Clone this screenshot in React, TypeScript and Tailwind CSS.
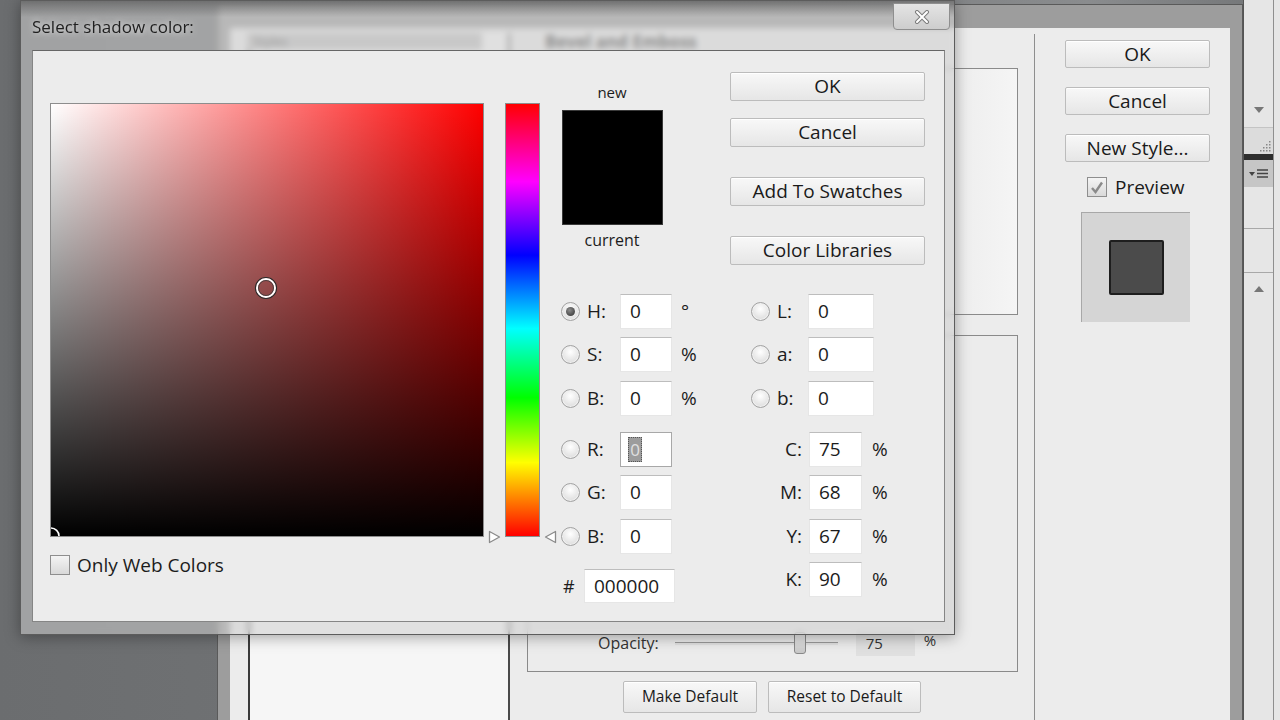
import React from "react";

const ui = "font-[family-name:'Open_Sans','Noto_Sans',sans-serif]";

function Btn({ children, className = "" }: { children: React.ReactNode; className?: string }) {
  return (
    <div
      className={`flex items-center justify-center rounded-[2px] border border-[#bcbcbc] bg-[linear-gradient(to_bottom,#f8f8f8,#e6e6e6)] text-[#1a1a1a] shadow-[inset_0_1px_0_#ffffff] ${className}`}
    >
      {children}
    </div>
  );
}

function Radio({ on = false }: { on?: boolean }) {
  return (
    <span className="flex h-[19px] w-[19px] shrink-0 items-center justify-center rounded-full border border-[#a2a2a2] bg-[radial-gradient(circle_at_50%_35%,#ffffff,#d4d4d4)] shadow-[inset_0_0_0_1px_#f0f0f0]">
      {on && <span className="h-[9px] w-[9px] rounded-full bg-[radial-gradient(circle_at_40%_35%,#8c8c8c,#2c2c2c)]" />}
    </span>
  );
}

function Check({ on = false }: { on?: boolean }) {
  return (
    <span className="flex h-[20px] w-[20px] shrink-0 items-center justify-center border border-[#8e8e8e] bg-[linear-gradient(to_bottom,#f4f4f4,#d9d9d9)]">
      {on && (
        <svg width="14" height="13" viewBox="0 0 14 13">
          <path d="M2 7 L5.5 11 L12 1.5" fill="none" stroke="#8a8a8a" strokeWidth="2.4" />
        </svg>
      )}
    </span>
  );
}

function Box({ w, children }: { w: string; children: React.ReactNode }) {
  return (
    <div className={`flex h-[35px] shrink-0 items-center border border-[#e6e6e6] border-t-[#bdbdbd] bg-white pl-[9px] text-[19px] text-[#1c1c1c] ${w}`}>
      {children}
    </div>
  );
}

type LeftRow = { label: string; v: string; unit?: string; on?: boolean; focus?: boolean };
type RightRow = { label: string; v: string; radio: boolean };

const leftRows: LeftRow[] = [
  { label: "H:", v: "0", unit: "°", on: true },
  { label: "S:", v: "0", unit: "%" },
  { label: "B:", v: "0", unit: "%" },
  { label: "R:", v: "0", focus: true },
  { label: "G:", v: "0" },
  { label: "B:", v: "0" },
];

const rightRows: RightRow[] = [
  { label: "L:", v: "0", radio: true },
  { label: "a:", v: "0", radio: true },
  { label: "b:", v: "0", radio: true },
  { label: "C:", v: "75", radio: false },
  { label: "M:", v: "68", radio: false },
  { label: "Y:", v: "67", radio: false },
];

const rowGaps = ["mt-0", "mt-[8px]", "mt-[9px]", "mt-[16px]", "mt-[8px]", "mt-[9px]"];

function RightHalf({ row }: { row: RightRow }) {
  if (row.radio) {
    return (
      <div className="flex items-center pl-[3px]">
        <Radio />
        <span className="ml-[7px] w-[31px] text-[19px]">{row.label}</span>
        <Box w="w-[66px]">{row.v}</Box>
      </div>
    );
  }
  return (
    <div className="flex items-center">
      <span className="w-[54px] text-right text-[19px]">{row.label}</span>
      <div className="ml-[7px]">
        <Box w="w-[53px]">{row.v}</Box>
      </div>
      <span className="ml-[10px] text-[19px]">%</span>
    </div>
  );
}

function Picker() {
  return (
    <div className="absolute left-[20px] top-0 flex h-[635px] w-[935px] flex-col border border-[#5c5c5c] bg-[rgba(205,205,205,0.55)] shadow-[0_2px_14px_rgba(0,0,0,0.35)] backdrop-blur-[3px]">
      <div className="pointer-events-none absolute inset-x-0 top-0 h-[16px] bg-[linear-gradient(to_bottom,rgba(70,70,70,0.55),rgba(70,70,70,0))]" />
      <div className="relative h-[49px] shrink-0 pl-[11px] pt-[15px] text-[17px] leading-[22px] text-[#1f1f1f] [text-shadow:0_0_6px_rgba(255,255,255,0.9)]">
        Select shadow color:
      </div>
      <div className="absolute right-[4px] top-[2px] flex h-[27px] w-[57px] items-center justify-center rounded-b-[4px] border border-[#8e8e8e] bg-[linear-gradient(to_bottom,#e4e4e4,#cdcdcd)]">
        <svg width="16" height="14" viewBox="0 0 16 14">
          <path d="M3 2 L13 12 M13 2 L3 12" stroke="#7c7c7c" strokeWidth="4" strokeLinecap="round" />
          <path d="M3 2 L13 12 M13 2 L3 12" stroke="#ffffff" strokeWidth="2" strokeLinecap="round" />
        </svg>
      </div>

      <div className="mb-[12px] ml-[11px] mr-[9px] flex flex-1 border border-[#858585] border-t-[#666666] bg-[#ececec] text-[#1c1c1c]">
        {/* field + hue */}
        <div className="ml-[17px] mt-[52px] flex flex-col">
          <div className="flex">
            <div className="relative h-[434px] w-[434px] overflow-hidden border border-[#8d8d8d] bg-[linear-gradient(to_top,#000000,rgba(0,0,0,0)),linear-gradient(to_right,#ffffff,#ff0000)]">
              <svg className="absolute left-[203px] top-[172px]" width="24" height="24" viewBox="0 0 24 24">
                <circle cx="12" cy="12" r="10.5" fill="none" stroke="#2a2a2a" strokeWidth="1.2" />
                <circle cx="12" cy="12" r="9" fill="none" stroke="#ffffff" strokeWidth="2" />
                <circle cx="12" cy="12" r="7.5" fill="none" stroke="#3a3a3a" strokeWidth="0.8" />
              </svg>
              <svg className="absolute left-[-10px] top-[422px]" width="20" height="20" viewBox="0 0 20 20">
                <circle cx="10" cy="10" r="8" fill="none" stroke="#ffffff" strokeWidth="1.6" />
              </svg>
            </div>
            <div className="relative ml-[21px] h-[434px] w-[35px] border border-[#8d8d8d] bg-[linear-gradient(to_bottom,#ff0000,#ff00ff_18%,#0000ff_35%,#00ffff_52%,#00ff00_68%,#ffff00_83%,#ff0000)]">
              <svg className="absolute left-[-18px] top-[426px]" width="13" height="14" viewBox="0 0 13 14">
                <path d="M1.5 1.5 L11.5 7 L1.5 12.5 Z" fill="#ffffff" stroke="#8a8a8a" strokeWidth="1.3" strokeLinejoin="round" />
              </svg>
              <svg className="absolute left-[38px] top-[426px]" width="13" height="14" viewBox="0 0 13 14">
                <path d="M11.5 1.5 L1.5 7 L11.5 12.5 Z" fill="#ffffff" stroke="#8a8a8a" strokeWidth="1.3" strokeLinejoin="round" />
              </svg>
            </div>
          </div>
          <div className="mt-[17px] flex items-center">
            <Check />
            <span className="ml-[7px] text-[19px] leading-[22px]">Only Web Colors</span>
          </div>
        </div>

        {/* right part */}
        <div className="ml-[20px] mt-[21px] flex flex-col">
          <div className="flex">
            <div className="flex w-[104px] flex-col items-center">
              <span className="mt-[11px] text-[15px] leading-[18px]">new</span>
              <div className="mt-[9px] h-[115px] w-[101px] border border-[#3a3a3a] bg-black" />
              <span className="mt-[5px] text-[16px] leading-[20px]">current</span>
            </div>
            <div className="ml-[66px] flex w-[195px] flex-col">
              <Btn className="h-[29px] text-[19px]">OK</Btn>
              <Btn className="mt-[17px] h-[29px] text-[19px]">Cancel</Btn>
              <Btn className="mt-[30px] h-[29px] text-[19px]">Add To Swatches</Btn>
              <Btn className="mt-[30px] h-[29px] text-[19px]">Color Libraries</Btn>
            </div>
          </div>

          <div className="mt-[29px] flex flex-col">
            {leftRows.map((r, i) => (
              <div key={i} className={`flex h-[35px] items-center ${rowGaps[i]}`}>
                <div className="flex w-[188px] items-center pl-[1px]">
                  <Radio on={r.on} />
                  <span className="ml-[7px] w-[33px] text-[19px]">{r.label}</span>
                  {r.focus ? (
                    <div className="flex h-[35px] w-[52px] items-center border border-[#a8a8a8] bg-white pl-[7px]">
                      <span className="flex h-[25px] w-[14px] items-center justify-center border border-dotted border-[#555] bg-[#9c9c9c] text-[17px] text-[#e0e0e0]">
                        0
                      </span>
                    </div>
                  ) : (
                    <Box w="w-[52px]">{r.v}</Box>
                  )}
                  {r.unit && <span className="ml-[9px] text-[19px]">{r.unit}</span>}
                </div>
                <RightHalf row={rightRows[i]} />
              </div>
            ))}
            <div className="mt-[8px] flex items-start">
              <div className="flex w-[188px] items-center pl-[3px] pt-[7px]">
                <span className="w-[21px] text-[18px]">#</span>
                <div className="flex h-[34px] w-[91px] items-center border border-[#e6e6e6] border-t-[#bdbdbd] bg-white pl-[9px] text-[19px]">
                  000000
                </div>
              </div>
              <div className="flex h-[35px] items-center">
                <RightHalf row={{ label: "K:", v: "90", radio: false }} />
              </div>
            </div>
          </div>
        </div>
      </div>
    </div>
  );
}

function BackDialog() {
  return (
    <div className="absolute left-[217px] top-[4px] h-[740px] w-[1026px] border border-[#5a5a5a] bg-[#9d9d9d]">
      <div className="ml-[12px] mt-[23px] flex h-[716px] w-[1000px] bg-[#ececec] text-[#1a1a1a]">
        <div className="ml-[18px] mt-[5px] w-[262px] border-l-2 border-r-2 border-l-[#3a3a3a] border-r-[#4a4a4a] bg-[#f6f6f6]">
          <div className="-ml-[3px] h-[17px] w-[235px] bg-[#c2c2c2] pl-[6px] text-[13px] leading-[17px] text-[#555]">Styles</div>
        </div>

        <div className="mt-[6px] flex w-[525px] flex-col border-r border-[#8e8e8e]">
          <div className="h-[34px] pl-[35px] text-[17px] font-bold leading-[16px] text-[#3a3a3a]">Bevel and Emboss</div>
          <div className="ml-[17px] h-[247px] w-[491px] border border-[#8a8a8a] bg-[linear-gradient(to_right,#ececec,#ececec_85%,#f5f5f5)]" />
          <div className="ml-[17px] mt-[20px] flex h-[337px] w-[491px] flex-col justify-end border border-[#8a8a8a] pb-[15px]">
            <div className="flex items-center pl-[70px]">
              <span className="text-[16px] text-[#333]">Opacity:</span>
              <div className="relative ml-[16px] h-[3px] w-[163px] border-t border-[#9a9a9a] bg-[#e0e0e0]">
                <div className="absolute left-[119px] top-[-11px] h-[22px] w-[12px] rounded-[3px] border border-[#8a8a8a] bg-[linear-gradient(to_bottom,#f0f0f0,#c8c8c8)]" />
              </div>
              <div className="ml-[18px] flex h-[26px] w-[59px] items-center bg-[#e0e0e0] pl-[10px] text-[15px] text-[#333]">75</div>
              <span className="-mt-[6px] ml-[9px] text-[15px] text-[#333]">%</span>
            </div>
          </div>
          <div className="ml-[113px] mt-[9px] flex gap-[11px]">
            <Btn className="h-[32px] w-[134px] text-[15.5px]">Make Default</Btn>
            <Btn className="h-[32px] w-[153px] text-[15.5px]">Reset to Default</Btn>
          </div>
        </div>

        <div className="flex w-[195px] flex-col pl-[30px] pt-[12px]">
          <Btn className="h-[28px] w-[145px] text-[19px]">OK</Btn>
          <Btn className="mt-[19px] h-[28px] w-[145px] text-[19px]">Cancel</Btn>
          <Btn className="mt-[19px] h-[28px] w-[145px] text-[19px]">New Style...</Btn>
          <div className="ml-[22px] mt-[15px] flex h-[20px] items-center">
            <Check on />
            <span className="ml-[8px] text-[19px]">Preview</span>
          </div>
          <div className="ml-[16px] mt-[15px] flex h-[110px] w-[109px] items-center justify-center border-l border-t border-[#a8a8a8] bg-[#d5d5d5]">
            <div className="h-[55px] w-[55px] rounded-[2px] border-2 border-[#1e1e1e] bg-[#4b4b4b]" />
          </div>
        </div>
      </div>
    </div>
  );
}

function SidePanel() {
  return (
    <div className="absolute left-[1243px] top-0 flex h-[720px] w-[37px] border-l border-[#555] bg-[#e6e6e6]">
      <div className="flex w-[30px] flex-col border-r border-[#8f8f8f]">
        <div className="h-[104px] shrink-0" />
        <div className="flex h-[12px] shrink-0 items-center justify-center">
          <svg width="10" height="6" viewBox="0 0 10 6">
            <path d="M0 0 L10 0 L5 6 Z" fill="#777" />
          </svg>
        </div>
        <div className="h-[11px] shrink-0" />
        <div className="relative h-[27px] shrink-0 border-t border-[#c4c4c4] bg-[#dcdcdc]">
          <svg className="absolute bottom-[2px] right-[2px]" width="12" height="12" viewBox="0 0 12 12">
            {[
              [10, 2], [10, 5], [7, 5], [10, 8], [7, 8], [4, 8], [10, 11], [7, 11], [4, 11], [1, 11],
            ].map(([x, y], i) => (
              <rect key={i} x={x} y={y - 1} width="1.5" height="1.5" fill="#888" />
            ))}
          </svg>
        </div>
        <div className="h-[6px] shrink-0 bg-[#2e2e2e]" />
        <div className="flex h-[27px] shrink-0 items-center justify-center gap-[2px] bg-[#c6c6c6]">
          <svg width="6" height="4" viewBox="0 0 6 4">
            <path d="M0 0 L6 0 L3 4 Z" fill="#444" />
          </svg>
          <svg width="11" height="9" viewBox="0 0 11 9">
            <path d="M0 1 H11 M0 4.5 H11 M0 8 H11" stroke="#444" strokeWidth="1.3" />
          </svg>
        </div>
        <div className="h-[42px] shrink-0 border-b border-[#a8a8a8]" />
        <div className="h-[44px] shrink-0 border-b border-[#a8a8a8]" />
        <div className="mt-[13px] flex justify-center">
          <svg width="10" height="6" viewBox="0 0 10 6">
            <path d="M0 6 L10 6 L5 0 Z" fill="#777" />
          </svg>
        </div>
      </div>
    </div>
  );
}

export default function App() {
  return (
    <div
      className={`relative h-[720px] w-[1280px] overflow-hidden bg-[linear-gradient(to_right,#6b6d6f,#76787a_55%,#8a8c8e_85%,#727476)] ${ui}`}
    >
      <BackDialog />
      <SidePanel />
      <Picker />
    </div>
  );
}
